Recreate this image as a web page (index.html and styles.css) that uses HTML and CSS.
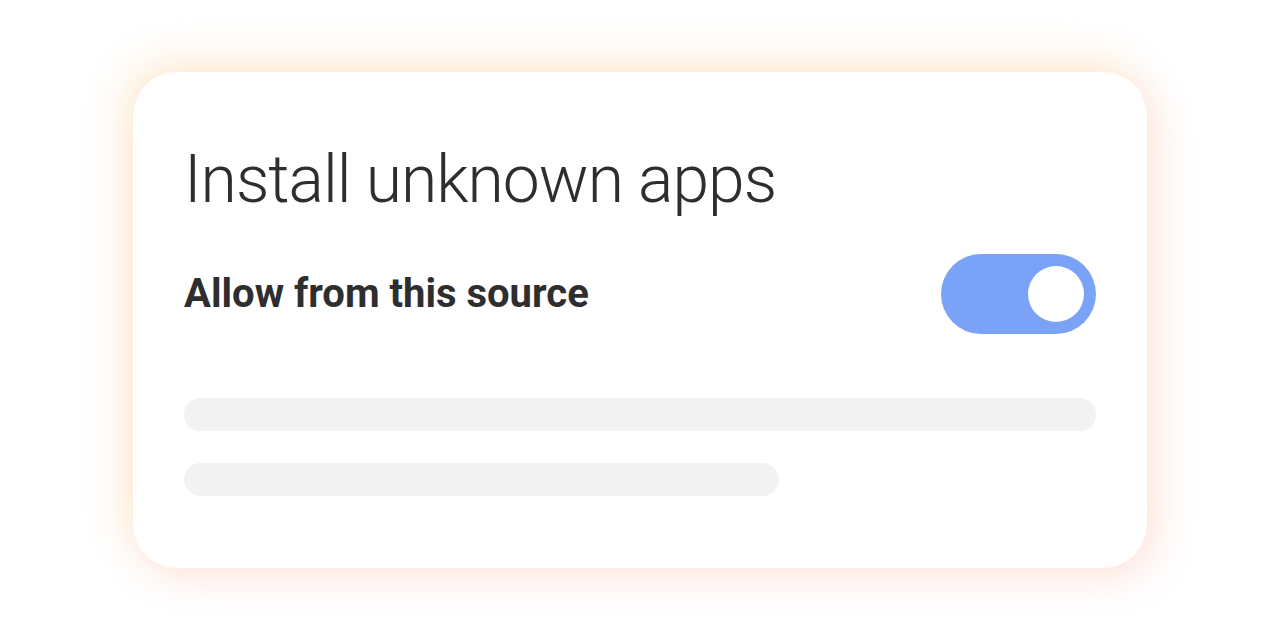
FILE: index.html
```html
<!DOCTYPE html>
<html lang="en">
<head>
<meta charset="utf-8">
<title>Install unknown apps</title>
<link rel="stylesheet" href="styles.css">
</head>
<body>
<main class="stage">
  <section class="card">
    <h1 class="title">Install unknown apps</h1>
    <div class="row">
      <span class="label">Allow from this source</span>
      <div class="toggle" role="switch" aria-checked="true"><span class="knob"></span></div>
    </div>
    <div class="bars">
      <div class="bar bar-full"></div>
      <div class="bar bar-short"></div>
    </div>
  </section>
</main>
</body>
</html>
```

FILE: styles.css
```css
html, body {
  margin: 0;
  padding: 0;
  background: #ffffff;
}
body {
  font-family: Roboto, "Liberation Sans", sans-serif;
  color: #2f2f2f;
}
.stage {
  width: 1280px;
  height: 640px;
  display: flex;
  align-items: center;
  justify-content: center;
}
.card {
  box-sizing: border-box;
  width: 1014px;
  padding: 68px 51px 72px 51px;
  background: #ffffff;
  border-radius: 44px;
  box-shadow:
    -10px -12px 40px rgba(252, 205, 140, 0.3),
    10px 10px 40px rgba(248, 160, 135, 0.24);
}
.title {
  margin: 0;
  font-weight: 300;
  font-size: 66px;
  line-height: 80px;
  color: #2e2e2e;
  letter-spacing: -1px;
}
.row {
  margin-top: 34px;
  display: flex;
  align-items: center;
  justify-content: space-between;
}
.label {
  font-weight: 700;
  font-size: 40px;
  line-height: 48px;
  color: #2e2e2e;
}
.toggle {
  width: 155px;
  height: 80px;
  border-radius: 40px;
  background: #7aa2f7;
  display: flex;
  align-items: center;
  justify-content: flex-end;
  padding-right: 12px;
  box-sizing: border-box;
}
.knob {
  width: 56px;
  height: 56px;
  border-radius: 50%;
  background: #ffffff;
}
.bars {
  margin-top: 64px;
  display: flex;
  flex-direction: column;
  gap: 32px;
}
.bar {
  height: 33px;
  border-radius: 17px;
  background: #f2f2f2;
}
.bar-short {
  width: 595px;
}
```
